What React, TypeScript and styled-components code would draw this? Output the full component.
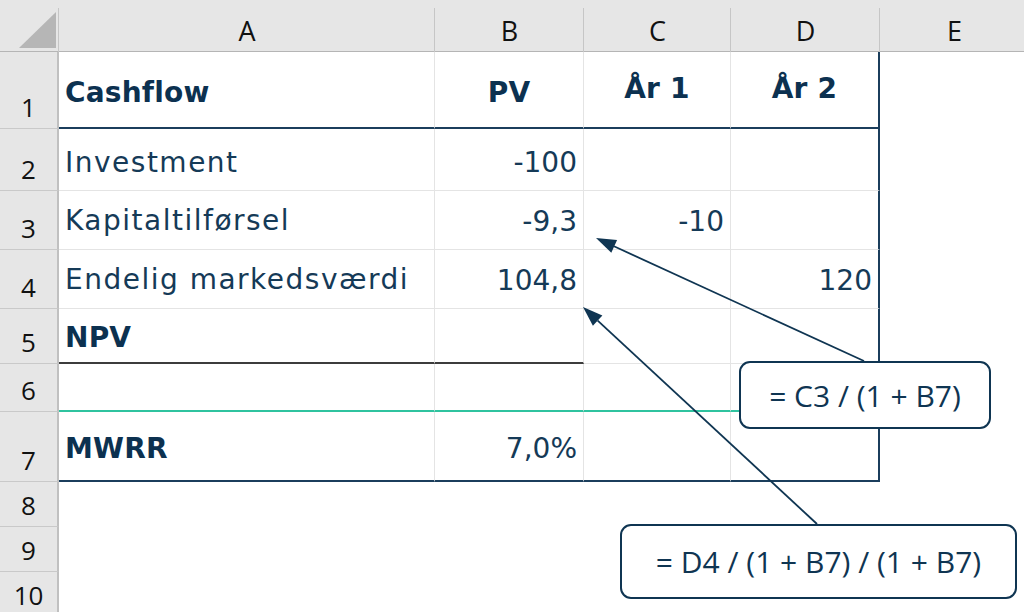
import React from "react";
import styled, { createGlobalStyle } from "styled-components";

const GlobalStyle = createGlobalStyle`
  html, body { margin: 0; padding: 0; background: #ffffff; overflow: hidden; }
  #root { width: 1024px; height: 612px; overflow: hidden; }
`;

const NAVY = "#0f3552";
const GRID = "#e4e4e4";
const HEAD_BG = "#e6e6e6";
const HEAD_LINE = "#c6c6c6";

const Stage = styled.div`
  position: relative;
  width: 1024px;
  height: 612px;
  overflow: hidden;
`;

const Sheet = styled.div`
  display: grid;
  grid-template-columns: 59px 376px 149px 147px 149px 149px;
  grid-template-rows: 52px 77px 62px 59px 59px 55px 48px 70px 45px 45px 45px;
  width: 1029px;
`;

const Corner = styled.div`
  background:
    linear-gradient(${HEAD_LINE}, ${HEAD_LINE}) right 0 bottom 0 / 1px 44px no-repeat,
    linear-gradient(#b5b5b5, #b5b5b5) left 0 bottom 0 / 100% 1px no-repeat,
    ${HEAD_BG};
  display: flex;
  align-items: flex-end;
  justify-content: flex-end;
  padding: 0 3px 4px 0;
  box-sizing: border-box;
`;

const CornerTriangle = styled.div`
  width: 0;
  height: 0;
  border-style: solid;
  border-width: 0 0 36px 37px;
  border-color: transparent transparent #b6b6b6 transparent;
`;

const ColHeader = styled.div`
  background:
    linear-gradient(${HEAD_LINE}, ${HEAD_LINE}) right 0 bottom 0 / 1px 44px no-repeat,
    linear-gradient(#b5b5b5, #b5b5b5) left 0 bottom 0 / 100% 1px no-repeat,
    ${HEAD_BG};
  display: flex;
  align-items: center;
  justify-content: center;
  padding-top: 8px;
  box-sizing: border-box;
  font-family: "Open Sans", "Liberation Sans", sans-serif;
  font-size: 27px;
  color: #111111;
`;

const RowHeader = styled.div`
  background: ${HEAD_BG};
  border-right: 2px solid #c0c0c0;
  border-bottom: 1px solid #c9c9c9;
  box-sizing: border-box;
  display: flex;
  align-items: flex-end;
  justify-content: center;
  padding-bottom: 4px;
  font-family: "Open Sans", "Liberation Sans", sans-serif;
  font-size: 26px;
  line-height: 34px;
  color: #111111;
`;

type Edge = "grid" | "navy" | "dark" | "teal" | "none";

const edgeColor = (e: Edge) =>
  e === "navy" ? "#1b3e5c" : e === "dark" ? "#3c3c3c" : e === "teal" ? "#2fc39f" : e === "grid" ? GRID : "transparent";

const Cell = styled.div<{
  $align?: "left" | "right" | "center";
  $bold?: boolean;
  $num?: boolean;
  $bottom?: Edge;
  $right?: Edge;
  $shift: number;
}>`
  box-sizing: border-box;
  display: flex;
  align-items: center;
  justify-content: ${(p) => (p.$align === "right" ? "flex-end" : p.$align === "center" ? "center" : "flex-start")};
  padding: ${(p) => Math.max(p.$shift, 0)}px 6px ${(p) => Math.max(-p.$shift, 0)}px 6px;
  border-bottom: ${(p) => ((p.$bottom ?? "grid") === "grid" || p.$bottom === "none" ? 1 : 2)}px solid ${(p) => edgeColor(p.$bottom ?? "grid")};
  border-right: ${(p) => ((p.$right ?? "grid") === "navy" ? 2 : 1)}px solid ${(p) => edgeColor(p.$right ?? "grid")};
  font-family: "DejaVu Sans", "Inter", sans-serif;
  font-size: 28px;
  letter-spacing: ${(p) => (p.$bold ? 0.2 : p.$num ? 0 : 1.5)}px;
  font-weight: ${(p) => (p.$bold ? 700 : 400)};
  color: ${(p) => (p.$bold ? "#0c3150" : "#153a57")};
  white-space: nowrap;
`;

const Blank = styled.div`
  background: #ffffff;
`;

const ArrowLayer = styled.svg`
  position: absolute;
  left: 0;
  top: 0;
  pointer-events: none;
`;

const Callout = styled.div<{ $left: number; $top: number; $w: number; $h: number }>`
  position: absolute;
  left: ${(p) => p.$left}px;
  top: ${(p) => p.$top}px;
  width: ${(p) => p.$w}px;
  height: ${(p) => p.$h}px;
  box-sizing: border-box;
  border: 2px solid ${NAVY};
  border-radius: 11px;
  background: #ffffff;
  display: flex;
  align-items: center;
  justify-content: center;
  font-family: "Open Sans", "Liberation Sans", sans-serif;
  font-size: 30px;
  color: ${NAVY};
  white-space: nowrap;
`;

type CellSpec = {
  text?: string;
  align?: "left" | "right" | "center";
  bold?: boolean;
  num?: boolean;
  bottom?: Edge;
  right?: Edge;
  shift?: number;
};

type RowSpec = { shift: number; cells: CellSpec[] };

const rows: RowSpec[] = [
  {
    shift: 5,
    cells: [
      { text: "Cashflow", bold: true, bottom: "navy" },
      { text: "PV", bold: true, align: "center", bottom: "navy" },
      { text: "År 1", bold: true, align: "center", bottom: "navy", shift: -3 },
      { text: "År 2", bold: true, align: "center", bottom: "navy", right: "navy", shift: -3 },
    ],
  },
  {
    shift: 6,
    cells: [{ text: "Investment" }, { text: "-100", align: "right", num: true }, {}, { right: "navy" }],
  },
  {
    shift: 1,
    cells: [
      { text: "Kapitaltilførsel" },
      { text: "-9,3", align: "right", num: true, shift: 3 },
      { text: "-10", align: "right", num: true, shift: 3 },
      { right: "navy" },
    ],
  },
  {
    shift: 1,
    cells: [
      { text: "Endelig markedsværdi" },
      { text: "104,8", align: "right", num: true, shift: 2 },
      {},
      { text: "120", align: "right", num: true, right: "navy", shift: 2 },
    ],
  },
  {
    shift: 4,
    cells: [{ text: "NPV", bold: true, bottom: "dark" }, { bottom: "dark" }, {}, { right: "navy" }],
  },
  {
    shift: 0,
    cells: [{ bottom: "teal" }, { bottom: "teal" }, { bottom: "teal" }, { bottom: "teal", right: "navy" }],
  },
  {
    shift: 4,
    cells: [
      { text: "MWRR", bold: true, bottom: "navy" },
      { text: "7,0%", align: "right", num: true, bottom: "navy" },
      { bottom: "navy" },
      { bottom: "navy", right: "navy" },
    ],
  },
];

const columns = ["A", "B", "C", "D", "E"];

export default function App() {
  return (
    <>
      <GlobalStyle />
      <Stage>
        <Sheet>
          <Corner>
            <CornerTriangle />
          </Corner>
          {columns.map((c) => (
            <ColHeader key={c}>{c}</ColHeader>
          ))}
          {rows.map((r, i) => (
            <React.Fragment key={i}>
              <RowHeader>{i + 1}</RowHeader>
              {r.cells.map((c, j) => (
                <Cell
                  key={j}
                  $align={c.align}
                  $bold={c.bold}
                  $num={c.num}
                  $bottom={c.bottom}
                  $right={c.right}
                  $shift={c.shift ?? r.shift}
                >
                  {c.text}
                </Cell>
              ))}
              <Blank />
            </React.Fragment>
          ))}
          {[8, 9, 10].map((n) => (
            <React.Fragment key={n}>
              <RowHeader>{n}</RowHeader>
              <Blank />
              <Blank />
              <Blank />
              <Blank />
              <Blank />
            </React.Fragment>
          ))}
        </Sheet>
        <ArrowLayer width="1024" height="612" viewBox="0 0 1024 612">
          <line x1="864" y1="361" x2="614" y2="246.3" stroke={NAVY} strokeWidth="1.8" />
          <polygon points="596,238 617.1,239.9 611.3,252.7" fill={NAVY} />
          <line x1="817" y1="524" x2="597.7" y2="320.6" stroke={NAVY} strokeWidth="1.8" />
          <polygon points="583,307 602.4,315.5 592.9,325.7" fill={NAVY} />
        </ArrowLayer>
        <Callout $left={739} $top={361} $w={252} $h={68}>= C3 / (1 + B7)</Callout>
        <Callout $left={620} $top={524} $w={397} $h={75}>= D4 / (1 + B7) / (1 + B7)</Callout>
      </Stage>
    </>
  );
}
